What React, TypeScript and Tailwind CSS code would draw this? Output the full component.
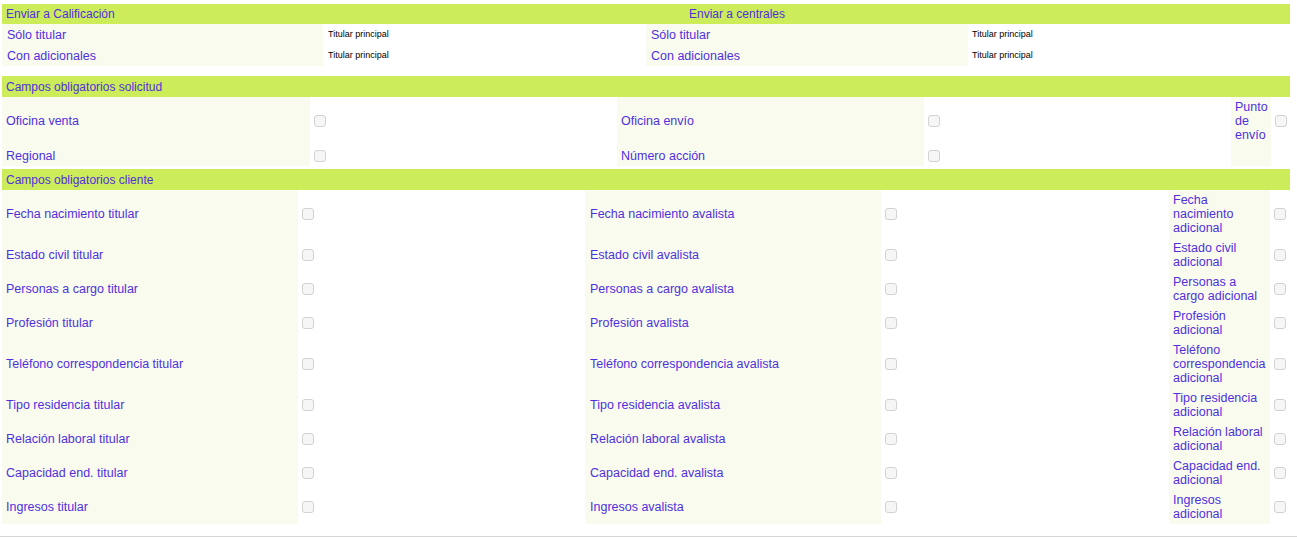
const font = "font-['Liberation_Sans',Arial,sans-serif]";
const txt = "text-[#5030de]";

const Check = () => (
  <span className="inline-block w-[12px] h-[12px] rounded-[3px] border border-[#d2d2d2] bg-[#f6f6f6]" />
);

const Header = ({ children, h = "h-[21px]" }: { children: React.ReactNode; h?: string }) => (
  <div className={`${h} bg-[#ccec5a] flex items-center text-[12px] ${txt}`}>{children}</div>
);

const Label = ({ text, cls = "" }: { text?: string; cls?: string }) => (
  <div className={`bg-[#f9fbef] flex items-center pl-[4px] py-[3px] text-[12.5px] leading-[14px] ${txt} ${cls}`}>
    {text}
  </div>
);

const CheckCell = () => (
  <div className="flex items-center pl-[4px]">
    <Check />
  </div>
);

const solicitud = [
  ["Oficina venta", "Oficina envío", "Punto de envío"],
  ["Regional", "Número acción", ""],
];

const cliente = [
  ["Fecha nacimiento titular", "Fecha nacimiento avalista", "Fecha nacimiento adicional"],
  ["Estado civil titular", "Estado civil avalista", "Estado civil adicional"],
  ["Personas a cargo titular", "Personas a cargo avalista", "Personas a cargo adicional"],
  ["Profesión titular", "Profesión avalista", "Profesión adicional"],
  ["Teléfono correspondencia titular", "Teléfono correspondencia avalista", "Teléfono correspondencia adicional"],
  ["Tipo residencia titular", "Tipo residencia avalista", "Tipo residencia adicional"],
  ["Relación laboral titular", "Relación laboral avalista", "Relación laboral adicional"],
  ["Capacidad end. titular", "Capacidad end. avalista", "Capacidad end. adicional"],
  ["Ingresos titular", "Ingresos avalista", "Ingresos adicional"],
];

export default function App() {
  return (
    <div className={`${font} bg-white min-h-[537px]`}>
      <div className="w-[1288px] ml-[2px] pt-[4px]">
        {/* Enviar */}
        <Header h="h-[20px]">
          <div className="w-[644px] pl-[4px]">Enviar a Calificación</div>
          <div className="pl-[43px]">Enviar a centrales</div>
        </Header>
        {["Sólo titular", "Con adicionales"].map((l) => (
          <div key={l} className="grid grid-cols-[321px_323px_322px_322px] h-[21px]">
            <Label text={l} cls="pl-[5px]" />
            <div className="flex items-center pl-[5px] text-[9px] text-black">Titular principal</div>
            <Label text={l} cls="pl-[5px]" />
            <div className="flex items-center pl-[4px] text-[9px] text-black">Titular principal</div>
          </div>
        ))}

        {/* solicitud */}
        <div className="mt-[10px]">
          <Header>
            <span className="pl-[4px]">Campos obligatorios solicitud</span>
          </Header>
          {solicitud.map((r, i) => (
            <div key={i} className="grid grid-cols-[308px_307px_307px_307px_40px_19px] min-h-[21px]">
              <Label text={r[0]} />
              <CheckCell />
              <Label text={r[1]} />
              <CheckCell />
              <Label text={r[2]} />
              {r[2] ? <CheckCell /> : <div />}
            </div>
          ))}
        </div>

        {/* cliente */}
        <div className="mt-[3px]">
          <Header>
            <span className="pl-[4px]">Campos obligatorios cliente</span>
          </Header>
          {cliente.map((r, i) => (
            <div key={i} className="grid grid-cols-[296px_287px_296px_288px_101px_20px]">
              <Label text={r[0]} />
              <CheckCell />
              <Label text={r[1]} cls="pl-[5px]" />
              <CheckCell />
              <Label text={r[2]} cls="pr-[3px]" />
              <CheckCell />
            </div>
          ))}
        </div>
      </div>
      <div className="mt-[12px] border-t border-[#d6d6d6]" />
    </div>
  );
}
